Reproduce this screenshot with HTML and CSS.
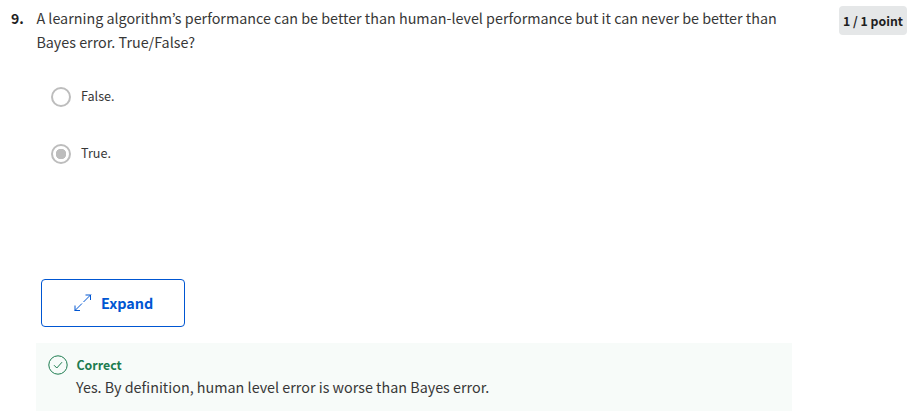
FILE: index.html
```html
<!DOCTYPE html>
<html lang="en">
<head>
<meta charset="utf-8">
<title>Quiz question</title>
<link rel="stylesheet" href="styles.css">
</head>
<body>
<main class="question">
  <div class="number">9.</div>
  <section class="content">
    <div class="prompt">A learning algorithm’s performance can be better than human-level performance but it can never be better than<br>Bayes error. True/False?</div>
    <div class="options">
      <div class="option"><span class="radio"></span><span class="label">False.</span></div>
      <div class="option"><span class="radio checked"></span><span class="label">True.</span></div>
    </div>
    <button class="expand">
      <svg width="18" height="18" viewBox="0 0 18 18" fill="none" stroke="currentColor"><path d="M9.500 8 17 .5M11.500 1H16.500v5M8 9.500.5 17M1 11.500V16.500h5"/></svg>
      <span>Expand</span>
    </button>
    <div class="feedback">
      <svg width="20" height="20" viewBox="0 0 20 20" fill="none" stroke="currentColor"><circle cx="10" cy="10" r="9.200"/><path d="m6 10.200 2.800 2.800 5.200-5.800"/></svg>
      <div class="message"><div class="title">Correct</div><div class="detail">Yes. By definition, human level error is worse than Bayes error.</div></div>
    </div>
  </section>
  <aside class="points">1 / 1 point</aside>
</main>
</body>
</html>
```
FILE: styles.css
```css
* { box-sizing: border-box; }
body { margin: 0; background: #fff; color: #373737; font-family: "Noto Sans CJK KR", "Noto Sans", sans-serif; }
.question { display: flex; align-items: flex-start; width: 919px; height: 414px; }
.number { width: 36px; padding: 6px 0 0 11px; color: #1f1f1f; font-size: 14px; font-weight: bold; line-height: 24px; }
.content { width: 756px; padding-top: 6px; }
.prompt { height: 49px; padding-left: 0.4px; font-size: 14.34px; line-height: 24px; white-space: nowrap; }
.options { padding: 32px 0 0 15px; height: 224px; }
.option { display: flex; align-items: center; gap: 10px; height: 20px; margin-bottom: 37px; font-size: 12.6px; }
.label { padding-bottom: 4px; }
.radio { width: 20px; height: 20px; border: 2px solid #bdbdbd; border-radius: 50%; }
.checked { background: radial-gradient(circle, #bdbdbd 5px, transparent 5.5px); }
.expand { display: flex; align-items: center; gap: 9px; width: 144px; height: 48px; margin: 0 0 16px 5px; padding: 0 0 0 32px; border: 1px solid #0056d2; border-radius: 4px; background: #fff; color: #0056d2; font: bold 14.4px/24px "Noto Sans CJK KR", "Noto Sans", sans-serif; }
.expand svg { margin-bottom: 1px; }
.feedback { display: flex; gap: 8px; height: 68px; padding: 12px; background: #f7fbf9; }
.feedback svg { color: #1d7c50; flex: none; }
.title { padding-left: 0.4px; color: #1d7c50; font-size: 12.4px; font-weight: bold; line-height: 20px; }
.detail { font-size: 14.35px; line-height: 24px; white-space: nowrap; }
.points { width: 68px; height: 29px; margin: 6px 0 0 47px; padding-top: 1px; border-radius: 4px; background: #e5e7e8; color: #1f1f1f; text-align: center; font-size: 12.3px; font-weight: bold; line-height: 29px; white-space: nowrap; }
```
